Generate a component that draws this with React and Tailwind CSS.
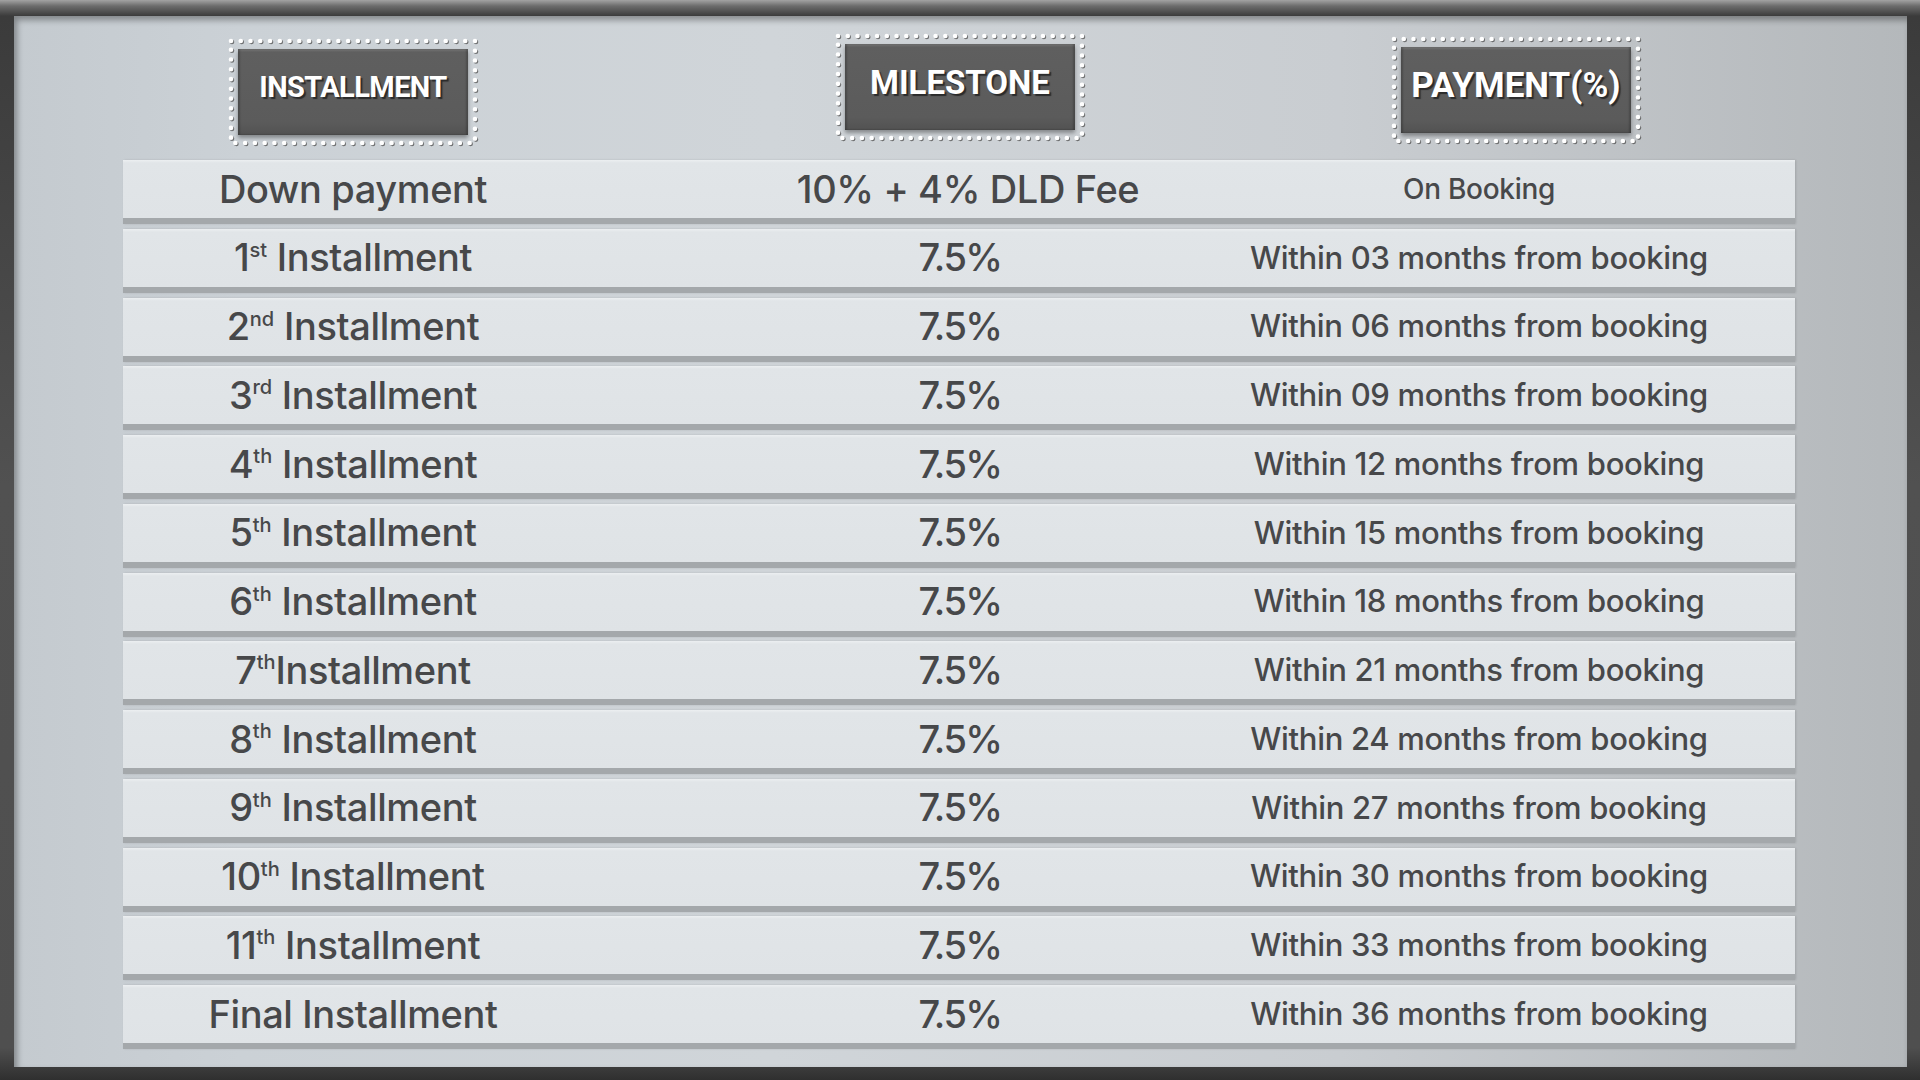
const rows = [
  { label: "Down payment", milestone: "10% + 4% DLD Fee", payment: "On Booking" },
  { num: "1", sup: "st", milestone: "7.5%", payment: "Within 03 months from booking" },
  { num: "2", sup: "nd", milestone: "7.5%", payment: "Within 06 months from booking" },
  { num: "3", sup: "rd", milestone: "7.5%", payment: "Within 09 months from booking" },
  { num: "4", sup: "th", milestone: "7.5%", payment: "Within 12 months from booking" },
  { num: "5", sup: "th", milestone: "7.5%", payment: "Within 15 months from booking" },
  { num: "6", sup: "th", milestone: "7.5%", payment: "Within 18 months from booking" },
  { num: "7", sup: "th", milestone: "7.5%", payment: "Within 21 months from booking", tight: true },
  { num: "8", sup: "th", milestone: "7.5%", payment: "Within 24 months from booking" },
  { num: "9", sup: "th", milestone: "7.5%", payment: "Within 27 months from booking" },
  { num: "10", sup: "th", milestone: "7.5%", payment: "Within 30 months from booking" },
  { num: "11", sup: "th", milestone: "7.5%", payment: "Within 33 months from booking" },
  { label: "Final Installment", milestone: "7.5%", payment: "Within 36 months from booking" },
];

function DottedFrame() {
  return (
    <svg
      className="pointer-events-none absolute inset-0 drop-shadow-[1px_1.5px_0_rgba(80,80,80,0.75)]"
      width="250"
      height="108"
      viewBox="0 0 250 108"
    >
      <rect
        x="3"
        y="3"
        width="244"
        height="102"
        fill="none"
        stroke="#ffffff"
        strokeWidth="4.6"
        strokeLinecap="round"
        strokeDasharray="0 9.76"
      />
    </svg>
  );
}

function HeaderBadge({ children, textClass }) {
  return (
    <div className="relative flex h-[108px] w-[250px] items-center justify-center">
      <DottedFrame />
      <div className="flex h-[86px] w-[230px] items-center justify-center bg-[linear-gradient(to_bottom,#7a7a7a_0px,#5f5f5f_3px,#5b5b5b_85%,#525252_100%)] pb-[8px] shadow-[0_3px_4px_rgba(0,0,0,0.35),inset_2px_0_2px_rgba(0,0,0,0.2),inset_-2px_0_2px_rgba(0,0,0,0.2)]">
        <span
          className={`font-['Roboto','Liberation_Sans',sans-serif] font-bold text-white [text-shadow:2px_2px_1px_#2b2b2b] ${textClass}`}
        >
          {children}
        </span>
      </div>
    </div>
  );
}

function InstallmentLabel({ row }) {
  if (row.label) return <span>{row.label}</span>;

  return (
    <span>
      {row.num}
      <sup className="top-[-0.72em] text-[20px] tracking-normal">{row.sup}</sup>
      {row.tight ? "" : " "}
      Installment
    </span>
  );
}

function App() {
  return (
    <div className="h-[1080px] w-[1920px] overflow-hidden bg-[linear-gradient(to_bottom,#a3a3a3_0px,#6c6c6c_6px,#3b3b3b_16px,#515151_45%,#4f4f4f_97%,#2f2f2f_100%)] pb-[13px] pl-[14px] pr-[13px] pt-[16px]">
      <div className="h-full w-full bg-[linear-gradient(to_right,#c4cacf_0%,#cbd1d6_12%,#d0d5d9_40%,#c9cdd1_70%,#b4b8bb_100%)] pl-[109px] shadow-[inset_3px_4px_6px_rgba(0,0,0,0.35)]">
        <div className="flex h-[144px] w-[1672px] items-start">
          <div className="flex w-[460px] justify-center pt-[22px]">
            <HeaderBadge textClass="text-[29px] tracking-[-0.02em]">INSTALLMENT</HeaderBadge>
          </div>
          <div className="flex w-[580px] justify-center pl-[174px] pt-[17px]">
            <HeaderBadge textClass="text-[33px]">MILESTONE</HeaderBadge>
          </div>
          <div className="flex w-[632px] justify-center pl-[74px] pt-[20px]">
            <HeaderBadge textClass="text-[35px]">PAYMENT(%)</HeaderBadge>
          </div>
        </div>

        <div className="flex w-[1672px] flex-col gap-[4.75px] font-['Inter','Noto_Sans',sans-serif] font-medium text-[#47484a]">
          {rows.map((row, index) => (
            <div
              key={index}
              className="flex h-[64px] items-center border-b-[6px] border-[#a4a8ab] bg-[linear-gradient(to_bottom,#eceff1_0px,#e1e5e8_3px,#dfe3e6_100%)] shadow-[1px_0_2px_rgba(0,0,0,0.12)]"
            >
              <div className="flex w-[460px] justify-center whitespace-nowrap text-[38px] tracking-[-0.01em]">
                <InstallmentLabel row={row} />
              </div>
              <div className="flex w-[580px] justify-center whitespace-nowrap pl-[174px] text-[38px]">
                <span className={index === 0 ? "ml-[16px] tracking-[-0.01em]" : "tracking-[-0.04em]"}>
                  {row.milestone}
                </span>
              </div>
              <div
                className={`flex w-[632px] justify-center whitespace-nowrap tracking-[-0.01em] ${
                  index === 0 ? "text-[28px]" : "text-[31px]"
                }`}
              >
                {row.payment}
              </div>
            </div>
          ))}
        </div>
      </div>
    </div>
  );
}

export default App;
